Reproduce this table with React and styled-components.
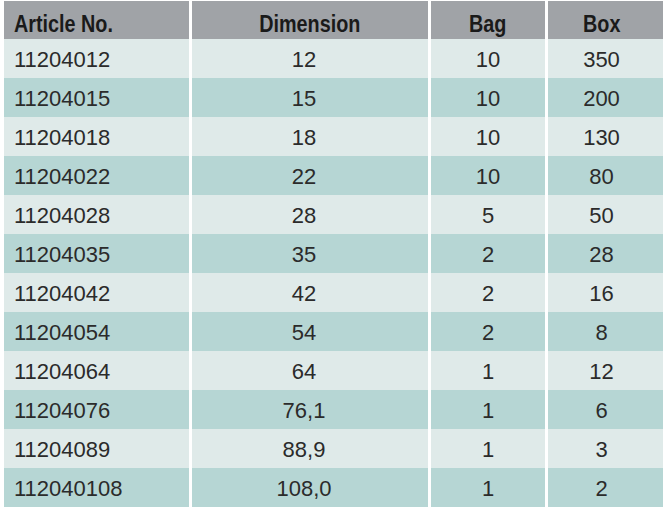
import React from 'react';
import styled, { createGlobalStyle } from 'styled-components';

const GlobalStyle = createGlobalStyle`
  html, body {
    margin: 0;
    padding: 0;
    background: #ffffff;
    font-family: "Liberation Sans", Arial, Helvetica, sans-serif;
  }
`;

const StyledTable = styled.table`
  border-collapse: separate;
  border-spacing: 3px 0;
  margin: 1px 1px 0;
  table-layout: fixed;
  width: 665px;
  color: #2b2b2b;
`;

const HeadCell = styled.th`
  height: 38px;
  padding: 9px ${({ $pr }) => $pr || 10}px 0 10px;
  box-sizing: border-box;
  background: #a0a3a7;
  color: #1a1a1a;
  font-family: "Liberation Sans", Arial, sans-serif;
  font-size: 23px;
  font-weight: 700;
  text-align: ${({ $align }) => $align || 'center'};
  vertical-align: middle;
  white-space: nowrap;
`;

// the original header face is a condensed bold, squeeze the label to match
const HeadLabel = styled.span`
  display: inline-block;
  transform: scaleX(0.86);
  transform-origin: ${({ $align }) => ($align === 'left' ? 'left' : 'center')} center;
`;

const Row = styled.tr`
  background: ${({ $shaded }) => ($shaded ? '#b6d6d4' : '#dfeae9')};
`;

const Cell = styled.td`
  height: 39px;
  padding: 2px ${({ $pr }) => $pr || 10}px 0 10px;
  box-sizing: border-box;
  font-family: "Liberation Sans", Arial, Helvetica, sans-serif;
  font-size: 22px;
  font-weight: 400;
  text-align: ${({ $align }) => $align || 'center'};
  vertical-align: middle;
`;

const columns = [
  { label: 'Article No.', width: 185, align: 'left' },
  { label: 'Dimension', width: 236, bodyPr: 22 },
  { label: 'Bag', width: 114 },
  { label: 'Box', width: 115, headPr: 18, bodyPr: 18 },
];

const rows = [
  ['11204012', '12', '10', '350'],
  ['11204015', '15', '10', '200'],
  ['11204018', '18', '10', '130'],
  ['11204022', '22', '10', '80'],
  ['11204028', '28', '5', '50'],
  ['11204035', '35', '2', '28'],
  ['11204042', '42', '2', '16'],
  ['11204054', '54', '2', '8'],
  ['11204064', '64', '1', '12'],
  ['11204076', '76,1', '1', '6'],
  ['11204089', '88,9', '1', '3'],
  ['112040108', '108,0', '1', '2'],
];

const App = () => (
  <>
    <GlobalStyle />
    <StyledTable>
      <colgroup>
        {columns.map((col) => (
          <col key={col.label} style={{ width: col.width }} />
        ))}
      </colgroup>
      <thead>
        <tr>
          {columns.map((col) => (
            <HeadCell key={col.label} $align={col.align} $pr={col.headPr}>
              <HeadLabel $align={col.align}>{col.label}</HeadLabel>
            </HeadCell>
          ))}
        </tr>
      </thead>
      <tbody>
        {rows.map((row, i) => (
          <Row key={row[0]} $shaded={i % 2 === 1}>
            {row.map((value, j) => (
              <Cell key={j} $align={columns[j].align} $pr={columns[j].bodyPr}>
                {value}
              </Cell>
            ))}
          </Row>
        ))}
      </tbody>
    </StyledTable>
  </>
);

export default App;
